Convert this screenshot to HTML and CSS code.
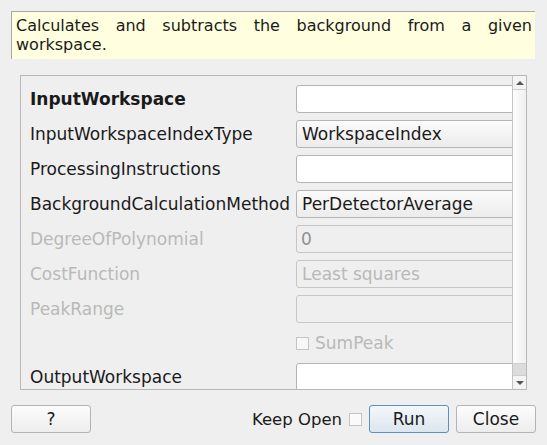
FILE: index.html
```html
<!DOCTYPE html>
<html>
<head>
<meta charset="utf-8">
<link rel="stylesheet" href="styles.css">
</head>
<body>
<div class="dialog">
  <div class="desc">Calculates and subtracts the background from a given workspace.</div>
  <div class="scrollarea">
    <div class="form">
      <div class="row"><div class="label bold">InputWorkspace</div><div class="field edit"></div></div>
      <div class="row"><div class="label">InputWorkspaceIndexType</div><div class="field combo">WorkspaceIndex</div></div>
      <div class="row"><div class="label">ProcessingInstructions</div><div class="field edit"></div></div>
      <div class="row"><div class="label">BackgroundCalculationMethod</div><div class="field combo">PerDetectorAverage</div></div>
      <div class="row"><div class="label disabled">DegreeOfPolynomial</div><div class="field edit off">0</div></div>
      <div class="row"><div class="label disabled">CostFunction</div><div class="field combo off">Least squares</div></div>
      <div class="row"><div class="label disabled">PeakRange</div><div class="field edit off"></div></div>
      <div class="row check-row"><div class="label"></div><div class="check disabled"><span class="box"></span>SumPeak</div></div>
      <div class="row"><div class="label">OutputWorkspace</div><div class="field edit"></div></div>
    </div>
    <div class="scrollbar">
      <div class="arrow up"><span class="tri-up"></span></div>
      <div class="handle"></div>
      <div class="groove"></div>
      <div class="arrow down"><span class="tri-down"></span></div>
    </div>
  </div>
  <div class="buttons">
    <button class="btn">?</button>
    <div class="spacer"></div>
    <span class="keep">Keep Open</span>
    <span class="box keepbox"></span>
    <button class="btn default">Run</button>
    <button class="btn">Close</button>
  </div>
</div>
</body>
</html>
```
FILE: styles.css
```css
html, body {
  margin: 0;
  padding: 0;
  background: #efefef;
  font-family: "DejaVu Sans", sans-serif;
  font-size: 16px;
  color: #1a1a1a;
}
.dialog {
  width: 547px;
  height: 445px;
  padding: 11px 11px 0 11px;
  box-sizing: border-box;
}
.desc {
  width: 524px;
  height: 48px;
  box-sizing: border-box;
  background: #ffffdf;
  border-top: 1px solid #a8a8a8;
  border-left: 1px solid #a8a8a8;
  padding: 4px 3px 0 4px;
  text-align: justify;
  line-height: 19px;
}
.scrollarea {
  margin: 16px 0 0 9px;
  width: 507px;
  height: 315px;
  box-sizing: border-box;
  border: 1px solid #b8b8b8;
  display: flex;
  overflow: hidden;
}
.form {
  flex: 1;
  overflow: hidden;
  padding: 9px 0 0 9px;
  display: flex;
  flex-direction: column;
  gap: 7px;
  font-size: 17px;
}
.row {
  display: flex;
  align-items: center;
  height: 28px;
  flex-shrink: 0;
}
.check-row { height: 26px; }
.label {
  width: 266px;
  flex-shrink: 0;
  white-space: nowrap;
}
.bold { font-weight: bold; }
.disabled { color: #b9b9b9; }
.field {
  width: 240px;
  height: 28px;
  flex-shrink: 0;
  box-sizing: border-box;
  border: 1px solid #b4b4b4;
  border-radius: 3px;
  padding-left: 5px;
  line-height: 26px;
  white-space: nowrap;
}
.edit { background: #ffffff; }
.combo {
  background: linear-gradient(#fbfbfb, #ececec);
}
.edit.off { background: #efefef; color: #8f8f8f; border-color: #c6c6c6; padding-left: 4px; }
.combo.off { background: #efefef; color: #b9b9b9; border-color: #c6c6c6; }
.check {
  display: flex;
  align-items: center;
  gap: 6px;
}
.box {
  display: inline-block;
  width: 13px;
  height: 13px;
  box-sizing: border-box;
  border: 1px solid #c4c4c4;
  background: #f7f7f7;
}
.scrollbar {
  width: 14px;
  box-sizing: border-box;
  border-left: 1px solid #c4c4c4;
  display: flex;
  flex-direction: column;
  background: #dedede;
}
.arrow {
  height: 13px;
  background: #f4f4f4;
  display: flex;
  align-items: center;
  justify-content: center;
  flex-shrink: 0;
}
.arrow.up { border-bottom: 1px solid #cfcfcf; }
.arrow.down { border-top: 1px solid #cfcfcf; }
.tri-up {
  width: 0; height: 0;
  border-left: 4px solid transparent;
  border-right: 4px solid transparent;
  border-bottom: 4px solid #555;
}
.tri-down {
  width: 0; height: 0;
  border-left: 4px solid transparent;
  border-right: 4px solid transparent;
  border-top: 4px solid #555;
}
.handle {
  height: 273px;
  background: linear-gradient(to right, #fdfdfd, #f0f0f0);
  border-bottom: 1px solid #d0d0d0;
  flex-shrink: 0;
}
.groove { flex: 1; background: #dcdcdc; }
.buttons {
  margin-top: 15px;
  display: flex;
  align-items: center;
  height: 28px;
}
.spacer { flex: 1; }
.btn {
  width: 80px;
  height: 28px;
  font-family: "DejaVu Sans", sans-serif;
  font-size: 17px;
  color: #1a1a1a;
  background: linear-gradient(#fcfcfc, #ededed);
  border: 1px solid #b4b4b4;
  border-radius: 3px;
  padding: 0;
}
.btn.default {
  border-color: #5d8fbf;
  background: linear-gradient(#f3f7fb, #dde6ee);
  margin-right: 7px;
}
.keep { margin-right: 7px; font-size: 16.5px; }
.keepbox { margin-right: 7px; background: #fafafa; }
```
